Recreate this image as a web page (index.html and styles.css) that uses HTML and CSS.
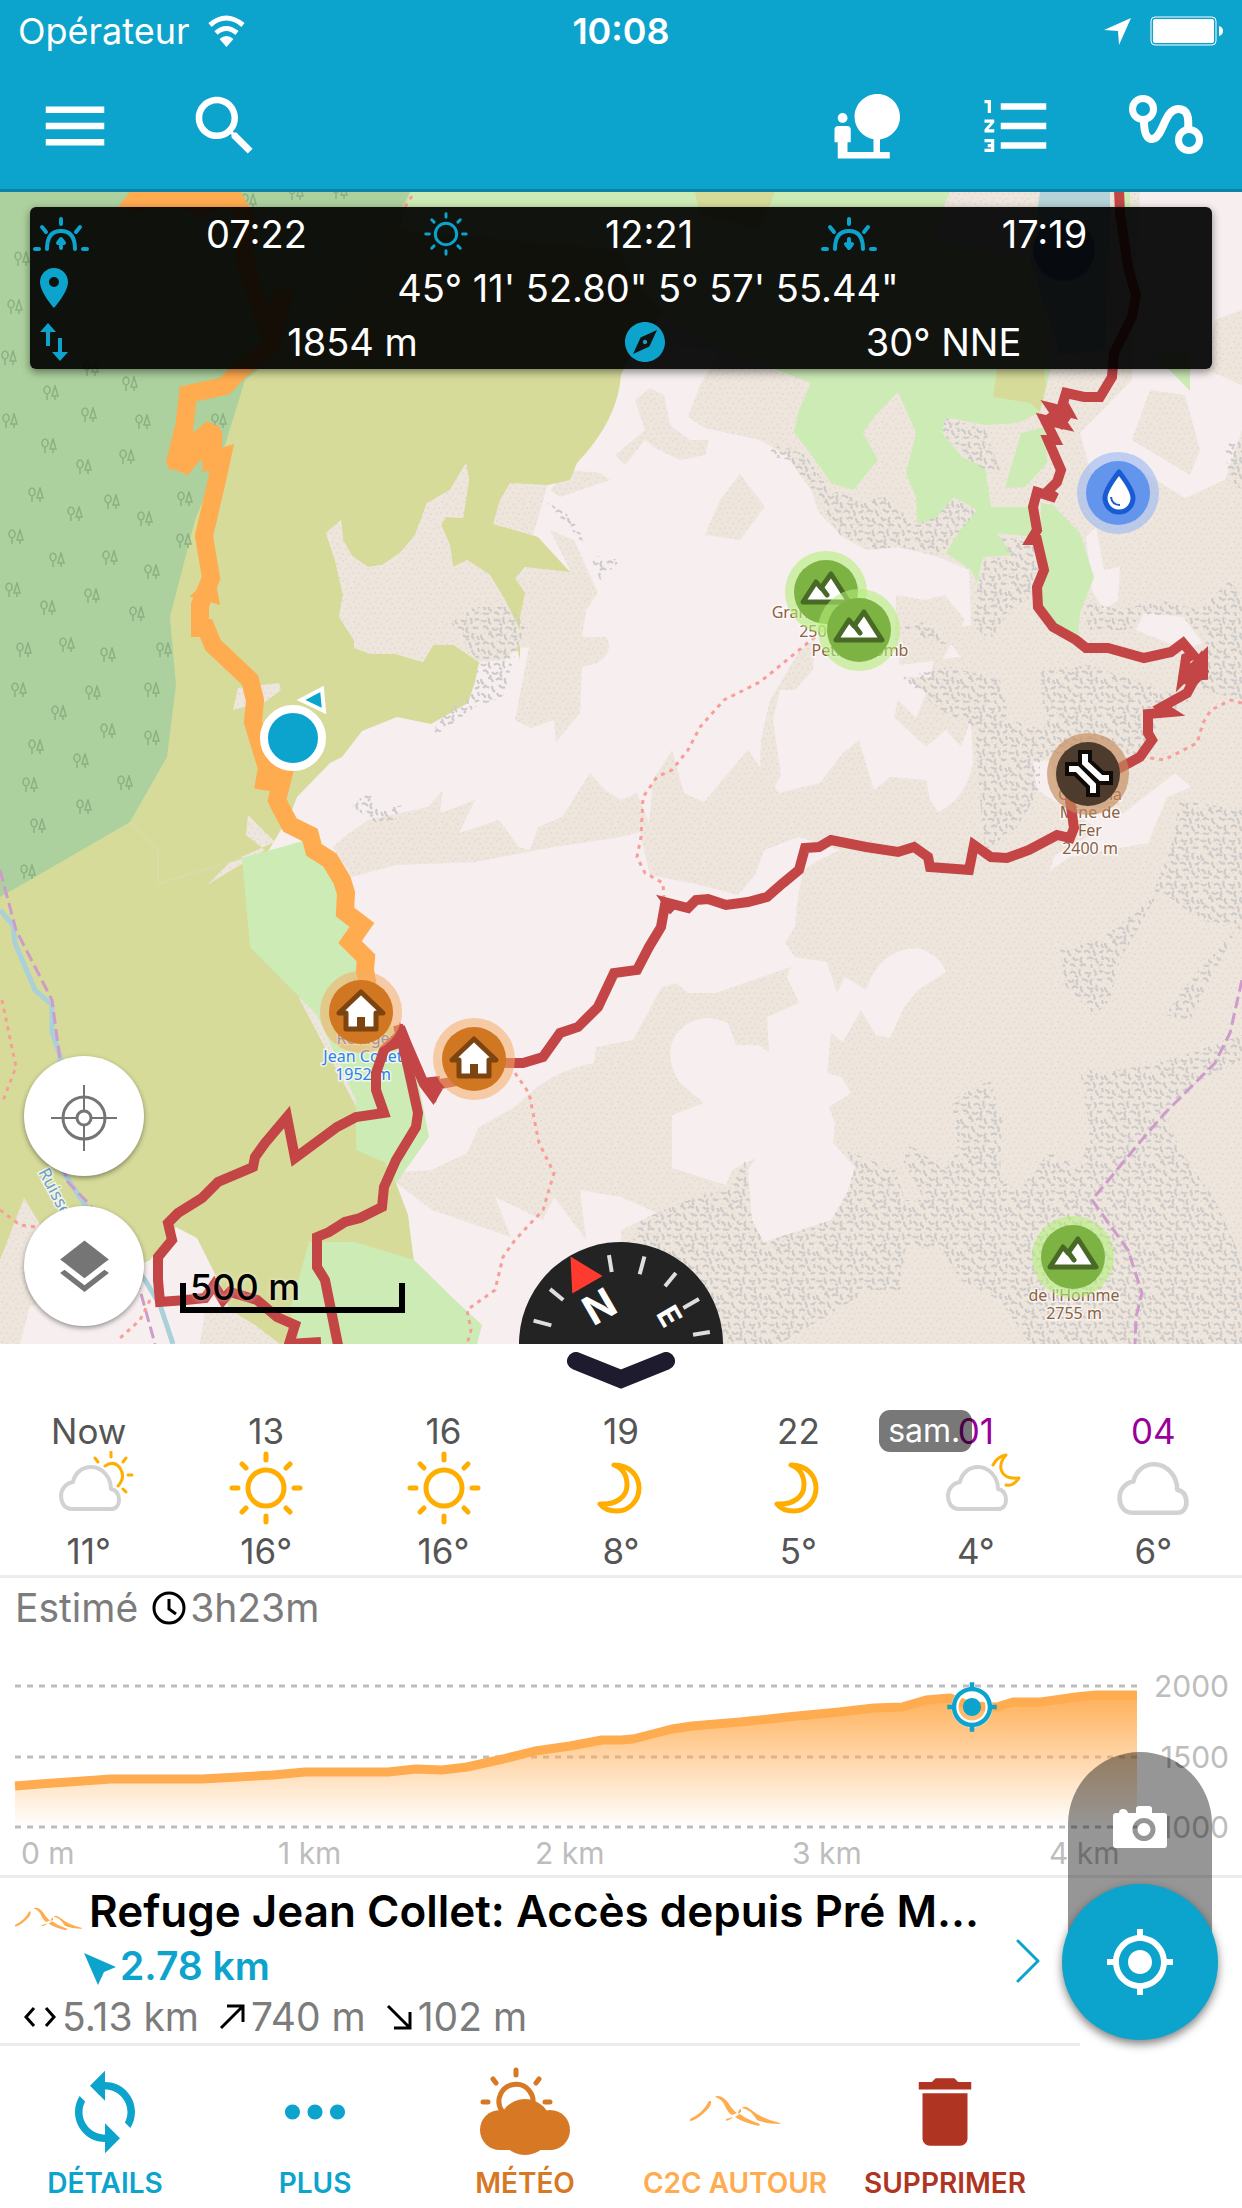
FILE: index.html
```html
<!DOCTYPE html>
<html lang="fr">
<head>
<meta charset="utf-8">
<meta name="viewport" content="width=device-width">
<title>Carte</title>
<link rel="stylesheet" href="styles.css">
</head>
<body>
<svg class="defs" aria-hidden="true">
  <defs>
    <symbol id="i-sun" viewBox="0 0 74 74"><g fill="none" stroke="currentColor" stroke-width="5" stroke-linecap="round"><circle cx="37" cy="37" r="18"/><path d="M37 3v6M37 65v6M3 37h6M65 37h6M13 13l4 4M57 57l4 4M61 13l-4 4M17 57l-4 4"/></g></symbol>
    <symbol id="i-moon" viewBox="0 0 90 74"><path fill="none" stroke="currentColor" stroke-width="5" stroke-linejoin="round" d="M38 14C54 14 63 25 63 37C63 50 53 60 41 60C33 60 27 57 24 53C40 54 51 46 51 34C51 24 46 17 38 14Z"/></symbol>
    <symbol id="i-cloud" viewBox="15 14 62 46"><path fill="none" stroke="#d2d2d2" stroke-width="4" stroke-linejoin="round" d="M28 58C20 58 17 51 17 45C17 38 22 32 29 31C31 22 38 16 47 16C58 16 67 26 67 38C72 39 75 43 75 49C75 54 72 58 67 58Z"/></symbol>
    <symbol id="i-gps" viewBox="0 0 24 24"><path fill="currentColor" d="M12 8c-2.21 0-4 1.79-4 4s1.79 4 4 4 4-1.79 4-4-1.79-4-4-4zm8.94 3c-.46-4.17-3.77-7.48-7.94-7.94V1h-2v2.06C6.83 3.52 3.52 6.83 3.06 11H1v2h2.06c.46 4.17 3.77 7.48 7.94 7.94V23h2v-2.06c4.17-.46 7.48-3.77 7.94-7.94H23v-2h-2.06zM12 19c-3.87 0-7-3.13-7-7s3.13-7 7-7 7 3.13 7 7-3.13 7-7 7z"/></symbol>
    <symbol id="i-c2c" viewBox="0 28 90 32"><path fill="currentColor" d="M0 52Q13 46 19 34L21 34Q22 38 16 44Q8 52 1 54Q-1 54 0 52ZM25 30Q27 28 32 30Q36 32 41 40Q44 44 47 46L42 48Q38 46 35 39Q32 32 25 30ZM48 45L50 42H51L51 45L48 47ZM36 52L43 50L41 52L36 54ZM45 50L50 47Q56 52 70 57L69 59Q54 56 45 50ZM52 41Q55 38 60 42Q72 52 90 56V57Q76 57 67 53Q60 42 52 41Z"/></symbol>
    <symbol id="m-peak" viewBox="-41 -41 82 82"><circle r="41" fill="#b4ee78" fill-opacity=".58"/><circle r="32" fill="#7db343"/><path d="M-23 10L-10 -10L-5 -4L5 -18L23 10Z" fill="#fff" stroke="#496a27" stroke-width="5" stroke-linejoin="round"/><path d="M-5 -5L1 3" stroke="#496a27" stroke-width="5" stroke-linecap="round"/></symbol>
    <symbol id="m-hut" viewBox="-41 -41 82 82"><circle r="41" fill="#f4ad66" fill-opacity=".55"/><circle r="32" fill="#d17722"/><path d="M0 -20L22 1H15V17H-15V1H-22Z" fill="#fff" stroke="#7c4411" stroke-width="5" stroke-linejoin="round"/><path d="M-4 17V5H4V17" fill="#7c4411"/></symbol>
    <symbol id="tree" viewBox="0 0 16 16"><path fill="none" stroke="#8bb082" stroke-width="1.5" d="M4 15V9M4 1a3 4 0 1 0 .1 0M12 15v-4M12 1l-3 10h6z"/></symbol>
    <pattern id="scree" width="22" height="20" patternUnits="userSpaceOnUse"><rect width="22" height="20" fill="#eee6dd"/><path stroke="#dcd3cd" stroke-width="1.6" stroke-linecap="round" d="M2 2h.1M7 4h.1M13 1h.1M18 4h.1M4 8h.1M10 8h.1M16 9h.1M21 8h.1M1 13h.1M7 13h.1M13 14h.1M19 14h.1M4 18h.1M10 18h.1M16 19h.1"/></pattern>
    <pattern id="rock" width="48" height="44" patternUnits="userSpaceOnUse"><path fill="none" stroke="#cdcbca" stroke-width="2.2" d="M1 4q3 3 5 0M9 2q-1 5 2 6M14 5q4-3 6 1M24 1q-2 4 1 7M29 4q4 3 6 0M38 2q3 3 1 6M43 4q2-2 4 0M3 11q4-2 5 3M12 12q3 4 6 0M22 11q-3 3 0 6M26 12q3-2 6 2M36 11q-3 3 0 6M41 11q3 2 5 0M1 19q0 4 3 5M8 18q4 0 5 4M16 20q3-3 6 0M25 18q-1 4 2 6M31 19q3 3 6 1M41 17q-2 4 1 6M45 20l2 4M3 28q3-3 6 0M12 26q0 4 3 6M19 25q3 4 6 2M28 28q3-3 6 1M37 26q3 4 1 6M43 28q3 1 4-2M1 34q4 0 4 4M9 34q-1 4 3 5M17 33q2 5 5 2M26 33q-3 3 0 6M31 35q3-3 6 0M40 34q0 4 3 5M3 41q4 2 6 0M14 41q3-2 5 2M24 42q3-3 6 0M35 40l1 4M43 42q2-2 4-1M19 8l3 1M32 9l2-2M6 25l-2 2M46 32l1 4M10 15l1 3M34 24l3-1"/></pattern>
  </defs>
</svg>

<header class="header">
  <div class="status">
    <span class="carrier">Opérateur
      <svg width="37" height="33" viewBox="0 0 37 33"><g fill="none" stroke="#fff" stroke-width="5"><path d="M2 10Q18 -4 35 10M8 18Q18 9 29 18"/></g><path fill="#fff" d="M11.500 24Q18.500 18 25.500 24L18.500 32Z"/></svg>
    </span>
    <span class="clock">10:08</span>
    <span class="power">
      <svg width="28" height="27" viewBox="0 0 28 27"><path fill="#fff" d="M27 0L15 27L14 13L0 12Z"/></svg>
      <svg width="74" height="30" viewBox="0 0 74 30"><rect x="1" y="1" width="65" height="28" rx="4" fill="none" stroke="#fff"/><rect x="3" y="3" width="61" height="24" rx="2" fill="#fff"/><path fill="#fff" d="M69 10q4 1 4 5t-4 5z"/></svg>
    </span>
  </div>
  <nav class="toolbar">
    <button aria-label="Menu"><svg viewBox="0 0 24 24"><path d="M3 18h18v-2H3v2zm0-5h18v-2H3v2zm0-7v2h18V6H3z"/></svg></button>
    <button aria-label="Rechercher"><svg viewBox="0 0 24 24"><path d="M15.500 14h-.79l-.28-.27C15.410 12.590 16 11.110 16 9.500 16 5.910 13.090 3 9.500 3S3 5.910 3 9.500 5.910 16 9.500 16c1.610 0 3.090-.59 4.230-1.570l.27.28v.79l5 4.990L20.490 19l-4.990-5zm-6 0C7.010 14 5 11.990 5 9.500S7.010 5 9.500 5 14 7.010 14 9.500 11.990 14 9.500 14z"/></svg></button>
    <button class="push" aria-label="Lieux"><svg viewBox="0 0 24 24"><path d="M22.170 9.170c0-3.870-3.130-7-7-7s-7 3.130-7 7c0 3.470 2.520 6.340 5.830 6.890V20H6v-3h1v-4c0-.55-.45-1-1-1H3c-.55 0-1 .45-1 1v4h1v5h16v-2h-3v-3.880c3.470-.41 6.170-3.360 6.170-6.950zM4.500 11c.83 0 1.500-.67 1.500-1.500S5.330 8 4.500 8 3 8.670 3 9.500 3.670 11 4.500 11z"/></svg></button>
    <button aria-label="Liste"><svg viewBox="0 0 24 24"><path d="M2 17h2v.5H3v1h1v.5H2v1h3v-4H2v1zm1-9h1V4H2v1h1v3zm-1 3h1.800L2 13.100v.9h3v-1H3.200L5 10.900V10H2v1zm5-6v2h14V5H7zm0 14h14v-2H7v2zm0-6h14v-2H7v2z"/></svg></button>
    <button aria-label="Itinéraires"><svg viewBox="0 0 78 78"><g class="line" stroke-width="7"><circle cx="15" cy="22" r="10.500"/><circle cx="61" cy="53" r="10.500"/><path stroke-width="8" d="M16 33C16 45 18 52 24 52C35 52 36 22 50 22C60 22 61 31 60 42"/></g></svg></button>
  </nav>
</header>

<main class="map">
  <svg class="map-canvas" viewBox="0 192 1242 1152" preserveAspectRatio="xMidYMid slice" role="img" aria-label="Carte topographique">
    <rect y="192" width="1242" height="1152" fill="url(#scree)"/>
    <!-- bare ground -->
    <g fill="#f6eeef">
      <path d="M590 340L720 350L700 385L688 417L705 428L760 440L786 455L811 490L819 513L843 537L866 550L898 547L938 557L969 570L971 625L940 630L950 643L961 657L934 660L930 677L906 677L926 693L916 718L898 700L894 717L926 747L946 730L961 747L971 720L973 763Q965 800 938 812L930 800L926 780L890 777L874 790L859 740L843 753L820 783L803 787L779 793L748 750L728 773L704 802L684 793L672 750L653 780L649 823L637 793L621 800L605 790L590 773L562 817L538 827L530 850L519 847L499 820L459 833L475 800L440 813L443 790L428 807L368 820L344 837L333 847L352 877L396 865L475 862L554 847L621 837L640 832L650 875L700 885L738 895L755 875L764 850L799 837L840 850L819 860L803 870L797 903L795 927L785 943L795 957L827 962L837 993L845 977L866 990Q880 948 918 948Q940 955 946 972L918 990L904 1007L890 1038L876 1035L861 1010L843 1042L831 1033L827 1073L841 1077L851 1093L829 1107L835 1123L833 1143L855 1167L847 1193L831 1220L764 1242L752 1220L748 1170L756 1158L732 1170L726 1185L672 1168V1115L704 1103L680 1083Q660 1050 680 1030Q700 1010 728 1023L736 1045H758L769 1052L767 1017L799 1003L787 977L791 967L716 993H688L676 983L661 988L633 1040L596 1047L594 1063Q550 1070 515 1107L479 1127L467 1153L432 1170L396 1172L240 860L290 700L520 580Z"/>
      <path d="M396 1183L432 1210L511 1237L495 1197L543 1220L554 1197L586 1240L580 1190L621 1197L657 1213L621 1230V1344H400Z"/>
      <path d="M15 1344L20 1310L80 1290L150 1260L176 1227L197 1238L218 1280L230 1300L200 1344ZM1140 192H1242V310L1215 320L1205 369L1242 385V430L1225 480L1185 498L1140 470L1096 490L1080 433L1132 380Z"/>
      <path d="M1086 537L1096 527L1104 570L1120 567L1118 600L1104 610L1092 590ZM1136 630L1144 613L1183 617L1203 643L1183 650L1168 643ZM1033 762L1050 760L1060 800L1124 813L1175 773L1191 787L1167 797L1148 843L1069 857L1049 872L1055 855L1100 830L1037 790Z"/>
    </g>
    <g fill="url(#scree)">
      <path d="M635 400L650 388L664 395L670 425L690 440L709 440L705 455L680 460L655 448L645 440L625 465L615 455L645 430ZM705 535L720 500L740 474L765 507L740 540ZM760 770L761 740L770 700L800 650L815 640L813 670L795 690L780 690L773 720L781 775L770 795ZM896 595L925 600L945 595L965 620L942 660L900 665L895 640ZM1150 390L1185 395L1200 450L1190 475L1132 440Z"/>
      <path d="M515 577L527 567L570 570L550 530L574 540L598 593L586 610L582 637L606 637Q615 650 598 663L582 667L580 713L556 742L554 720L531 728L515 720L529 647L505 650L500 580ZM550 490L570 470L600 473L610 480L560 497ZM490 540L515 542L538 545V566Z"/>
      <path d="M20 1200L30 1230L34 1290L20 1344H0V1290ZM205 1310L255 1300L290 1344H200Z"/>
    </g>
    <!-- heath and meadow -->
    <path fill="#d6db9a" d="M0 192H740L690 290Q640 330 621 375Q618 420 577 463L570 480L548 485L510 483L500 500L493 524L538 537L570 572L525 567L515 578L525 593L520 617V660L505 600L490 575L467 560L453 567L450 545L441 525L446 517L463 518L469 480L466 463L450 490L427 503L415 535L400 553L382 565L368 567L352 556L343 540L341 520L326 533L335 560L343 595L339 617L354 640V648L371 654H396L423 662L433 645H454L479 662L475 682L468 703L431 724L397 717L362 731L342 757L330 763L297 797L290 815L267 853L300 1000L396 1183L408 1215L414 1262L380 1310L280 1344L255 1325L230 1310L218 1280L197 1238L176 1227L150 1260L80 1290L24 1198L0 1340Z"/>
    <path fill="url(#scree)" d="M341 520L326 533L335 560L343 595L339 617L354 640V648L371 654H396L423 662L433 645H454L479 662L505 660L520 645V630L505 600L490 575L467 560L453 567L450 545L441 525L446 517L463 518L469 480L466 463L450 490L427 503L415 535L400 553L382 565L368 567L352 556L343 540ZM233 710L238 688L279 683L281 690L265 702ZM248 815L246 835L265 850L207 885L230 862L275 842ZM24 1198L38 1240L36 1290L0 1344V1260Z"/>
    <g fill="#cdebb5">
      <path d="M410 192H695L775 192H950L930 240L1040 260L1050 369L1046 390L1039 413L1017 423L985 425L946 417L942 433L962 457L985 467L991 507H1033V537L997 533L1013 555L983 557L977 583L971 570L946 553L960 530L977 510L954 497L934 520L917 523L916 497L906 473L916 433L906 410L898 392L874 417L863 433L878 460L853 490L831 483L815 460L794 432L799 410L811 383L775 369L700 340Q640 300 620 250L400 230ZM1021 433L1045 427L1047 463L1025 487L1005 488ZM1041 503L1053 505L1080 533L1094 577L1080 613L1078 638L1053 630L1040 600ZM1150 350H1190V391ZM1130 192H1115V240H1130Z"/>
      <path d="M242 858L303 841L335 870L370 965L390 1025L412 1050L429 1137L396 1183L386 1163L356 1150V1100L317 1015L250 947ZM309 1242H355L414 1260L455 1300L482 1325L477 1344H300L290 1310Z"/>
    </g>
    <path fill="#d6db9a" d="M695 192H775L760 230L700 215ZM997 369L993 397L1030 403L1040 412L1046 385L1044 369Z"/>
    <path fill="#add19e" d="M0 192H410L360 290L245 380L222 455L195 520L170 617L176 685L167 757L130 822L30 880L0 897Z"/>
    <path fill="#b5d3d8" d="M1040 192H1110V215L1105 350L1060 355L1030 260Z"/>
    <path fill="none" stroke="#d9dca6" stroke-width="2" d="M130 822L158 850V884L242 858"/>
    <!-- cliffs -->
    <g fill="url(#rock)">
      <path d="M762 455L780 445L805 455L830 490L860 500L885 497L915 525L935 517L955 497L977 510L958 535L940 555L898 547L870 550L840 535L811 490L790 460ZM945 417L985 430L1000 470L985 470L965 457L942 433ZM978 583L985 557L1010 558L1000 535L1035 545L1040 590L1010 610L990 640L972 625ZM1225 440H1242V490L1228 480Z"/>
      <path d="M902 677L950 667L1000 680L1010 720L1045 730L1040 670L1090 665L1190 700L1160 720L1140 760L1100 740L1040 760V790L1015 830L985 850L980 800L975 730L940 710ZM1080 600L1120 610L1160 600L1200 610L1230 580L1242 600V700L1200 690L1206 640L1180 615L1140 615L1130 630L1090 630ZM900 625L925 622L950 645L925 640Z"/>
      <path d="M1242 810L1180 800L1170 850L1150 900L1100 940L1060 950L1065 985L1095 1015L1110 1000L1120 960L1160 890L1200 920L1242 930ZM1240 925L1190 980L1165 1015L1190 1020L1210 980ZM1242 1035L1170 1060L1120 1070L1080 1070L1090 1130L1080 1170L1050 1150L1020 1190L1000 1180L1002 1120L990 1080L952 1100L958 1150L945 1170L910 1145L903 1160L925 1200L905 1200L895 1170L845 1150L855 1167L847 1193L831 1220L764 1242L752 1220L745 1160L728 1190L700 1195L640 1220L630 1250L720 1344H780L820 1320L870 1290L900 1290L905 1250L940 1245L960 1280L1000 1300L1030 1344H1242V1260L1215 1200L1180 1150L1165 1110L1200 1080L1242 1060Z"/>
      <path d="M451 623L475 607L511 607L525 627L511 667L503 697L475 707L434 737L436 720L471 693L479 663ZM547 503Q580 515 584 547L572 530ZM590 555L621 560L600 580ZM352 807L368 790L380 810L403 805L395 820L375 822Z"/>
    </g>
    <!-- woodland symbols -->
    <g>
      <use href="#tree" x="43" y="385" width="16" height="16"/><use href="#tree" x="81" y="407" width="16" height="16"/><use href="#tree" x="135" y="414" width="16" height="16"/><use href="#tree" x="2" y="413" width="16" height="16"/><use href="#tree" x="41" y="438" width="16" height="16"/><use href="#tree" x="119" y="449" width="16" height="16"/><use href="#tree" x="76" y="459" width="16" height="16"/><use href="#tree" x="28" y="487" width="16" height="16"/><use href="#tree" x="104" y="494" width="16" height="16"/><use href="#tree" x="67" y="506" width="16" height="16"/><use href="#tree" x="137" y="511" width="16" height="16"/><use href="#tree" x="177" y="491" width="16" height="16"/><use href="#tree" x="211" y="413" width="16" height="16"/><use href="#tree" x="8" y="529" width="16" height="16"/><use href="#tree" x="49" y="552" width="16" height="16"/><use href="#tree" x="102" y="550" width="16" height="16"/><use href="#tree" x="144" y="564" width="16" height="16"/><use href="#tree" x="176" y="533" width="16" height="16"/><use href="#tree" x="5" y="582" width="16" height="16"/><use href="#tree" x="84" y="588" width="16" height="16"/><use href="#tree" x="40" y="600" width="16" height="16"/><use href="#tree" x="129" y="606" width="16" height="16"/><use href="#tree" x="16" y="642" width="16" height="16"/><use href="#tree" x="59" y="637" width="16" height="16"/><use href="#tree" x="100" y="647" width="16" height="16"/><use href="#tree" x="156" y="642" width="16" height="16"/><use href="#tree" x="11" y="682" width="16" height="16"/><use href="#tree" x="85" y="685" width="16" height="16"/><use href="#tree" x="144" y="682" width="16" height="16"/><use href="#tree" x="51" y="705" width="16" height="16"/><use href="#tree" x="100" y="723" width="16" height="16"/><use href="#tree" x="144" y="730" width="16" height="16"/><use href="#tree" x="28" y="739" width="16" height="16"/><use href="#tree" x="73" y="753" width="16" height="16"/><use href="#tree" x="117" y="775" width="16" height="16"/><use href="#tree" x="22" y="777" width="16" height="16"/><use href="#tree" x="76" y="799" width="16" height="16"/><use href="#tree" x="30" y="818" width="16" height="16"/><use href="#tree" x="20" y="864" width="16" height="16"/><use href="#tree" x="241" y="193" width="16" height="16"/><use href="#tree" x="288" y="185" width="16" height="16"/><use href="#tree" x="332" y="184" width="16" height="16"/><use href="#tree" x="14" y="251" width="16" height="16"/><use href="#tree" x="7" y="299" width="16" height="16"/><use href="#tree" x="1" y="350" width="16" height="16"/><use href="#tree" x="83" y="361" width="16" height="16"/><use href="#tree" x="122" y="376" width="16" height="16"/>
    </g>
    <!-- streams, boundaries, footpaths -->
    <g fill="none">
      <path stroke="#aad0d8" stroke-width="5" d="M0 910L13 925L15 943L35 990L52 1005V1032L60 1055L62 1170L85 1205L145 1280L160 1305L173 1344"/>
      <g stroke="#cf9bcb" stroke-width="3" stroke-dasharray="12 5"><path d="M0 870L16 930L52 1000L60 1060L62 1150L66 1180L90 1205L140 1290L155 1344"/><path d="M1242 980L1230 1033L1215 1063L1165 1113L1140 1142L1092 1200L1128 1250L1142 1293L1136 1317L1135 1344"/></g>
      <g stroke="#f79e98" stroke-width="3" stroke-dasharray="4 5"><path d="M815 637L787 660L760 682L724 700L700 727L688 750L672 770L657 777L643 797L641 837L637 857L645 873L663 883L664 900"/><path d="M515 1073L529 1093L539 1143L554 1173L543 1210L515 1240L503 1257L495 1290L467 1310L471 1330L467 1344"/><path d="M1242 703L1231 700L1211 710L1203 723L1197 743L1164 760L1144 757"/><path d="M2 1000L16 1067L2 1103M0 1210L20 1225L38 1227M150 1300L140 1320L118 1340M412 196L402 212"/></g>
    </g>
    <!-- map labels -->
    <g class="place" text-anchor="middle">
      <text x="795" y="618">Grand</text><text x="827" y="637">2500 m</text><text x="860" y="656">Petit Colomb</text>
      <text x="1090" y="800">Col de la</text><text x="1090" y="818">Mine de</text><text x="1090" y="836">Fer</text><text x="1090" y="854">2400 m</text>
      <text x="1074" y="1301">de l'Homme</text><text x="1074" y="1319">2755 m</text>
    </g>
    <g class="place hut" text-anchor="middle"><text x="363" y="1044">Refuge</text><text x="363" y="1062">Jean Collet</text><text x="363" y="1080">1952 m</text></g>
    <text class="place river" transform="translate(38 1172) rotate(62)">Ruisseau</text>
    <!-- other routes -->
    <g fill="none" stroke="#c44546" stroke-width="10">
      <path d="M1119 190L1120 213L1128 267L1136 295L1132 317L1114 353L1112 377L1100 397L1084 397L1066 393L1063 403L1068 412L1052 408L1063 424L1045 420L1055 440L1048 440L1061 470L1057 482L1047 492L1056 498L1037 492L1033 507L1037 530L1031 540L1037 540L1044 570L1037 587L1038 607L1053 627L1076 640L1086 648L1108 648L1144 658L1171 652L1183 643L1193 655L1186 658L1183 678L1203 658L1203 675L1185 676L1195 678L1187 693L1162 707L1170 712L1148 714L1148 733L1152 740L1140 757L1120 768L1088 773L1070 800L1074 828L1070 838L1057 835L1029 850L1007 858L991 857L974 845L969 870L930 867L928 857L914 847L898 852L866 847L831 840L819 847L805 848L799 870L783 883L767 897L748 902L726 905L708 899L696 900L688 908L668 903L673 910L665 905L661 927L649 947L637 970L614 973L598 1007L578 1027L560 1033L543 1057L523 1063L507 1063L474 1060L460 1055L463 1080L440 1084L433 1096L424 1084L408 1047L400 1027"/>
      <path d="M398 1025L408 1067L418 1113L416 1127L396 1160L384 1187L382 1207L360 1218L345 1222L329 1232L317 1237L317 1267L325 1280L334 1325L339 1350"/>
      <path d="M400 1035L384 1050L376 1073V1090L384 1113L356 1117L337 1127L295 1158L287 1117L265 1143L255 1157L253 1167L218 1182L202 1198L178 1213L168 1223L172 1240L158 1257V1280L160 1302L186 1300L205 1298L214 1285L223 1300L230 1292L257 1300L277 1317L295 1325L289 1344L321 1342"/>
      <path fill="#c44546" stroke="none" d="M1180 680L1202 650L1209 672L1192 690ZM388 1052L400 1022L408 1045ZM422 1078L440 1076L436 1103ZM1060 404L1045 416L1062 430L1071 418Z"/>
    </g>
    <path fill="none" stroke="#ffab4f" stroke-width="18" d="M128 207L145 199L186 199L200 208L232 195L246 218L244 260L268 330L285 290L272 345L240 370L225 386L188 394L184 430L176 470M180 470L206 440L213 440L212 460L222 457L217 480L204 536L211 578L200 605V628L206 628L213 645L250 680L255 700L253 722L262 752L267 768L263 790"/>
    <path fill="#ffab4f" d="M118 207L130 192H235L246 207ZM166 463L175 425L194 432L207 421L220 427V452L230 456L217 485L197 453L181 473ZM190 596L208 580L216 583L220 605L210 602L191 597Z"/>
    <path fill="none" stroke="#ffab4f" stroke-width="18" d="M286 765L277 800L282 810L290 825L310 835L314 850L330 860L342 880L346 893L345 912L362 925L350 942L366 958L365 970L372 1010"/>
    <!-- points of interest -->
    <circle cx="1064" cy="250" r="31" fill="#3c67c9" opacity=".7"/>
    <use href="#m-peak" x="785" y="551" width="82" height="82"/>
    <use href="#m-peak" x="818" y="589" width="82" height="82"/>
    <use href="#m-peak" x="1032" y="1216" width="82" height="82"/>
    <use href="#m-hut" x="320" y="971" width="82" height="82"/>
    <use href="#m-hut" x="433" y="1018" width="82" height="82"/>
    <g transform="translate(1118 493)"><circle r="41" fill="#94b3f4" fill-opacity=".55"/><circle r="32" fill="#6395ec"/><path d="M1 -21Q15 -3 15 5A14 14 0 0 1 -13 5Q-13 -3 1 -21Z" fill="#fff" stroke="#195bd3" stroke-width="5" stroke-linejoin="round"/><path d="M-7 4Q-6 12 2 12" fill="none" stroke="#195bd3" stroke-width="2"/></g>
    <g transform="translate(1088 774)"><circle r="41" fill="#c48a5b" fill-opacity=".65"/><circle r="32" fill="#4d3b2e"/><g fill="none" stroke-linecap="square"><path stroke="#0d0a07" stroke-width="14" stroke-linejoin="round" d="M-3 -17V-11L13 4H18M-16 -5H-11L5 11V16"/><path stroke="#fff" stroke-width="6" d="M-3 -17V-11L13 4H18M-16 -5H-11L5 11V16"/></g></g>
    <!-- user position -->
    <circle cx="293" cy="738" r="29" fill="#0ca3cc" stroke="#fff" stroke-width="8"/>
    <path d="M301 700L322 689L324 711Z" fill="#0ca3cc" stroke="#fff" stroke-width="4"/>
    <!-- compass -->
    <g transform="translate(621 1344) rotate(-30)">
      <circle r="102" fill="#232323"/>
      <path fill="#ff3b30" d="M0 -101L18 -68H-17Z"/>
      <path stroke="#dedede" stroke-width="4" d="M34 -83L28 -67M64 -64L51 -51M83 -34L67 -28M90 0H72M83 34L67 28M-34 -83L-28 -67M-64 -64L-51 -51"/>
      <text class="north" y="-29" text-anchor="middle">N</text>
      <text class="east" transform="rotate(90)" y="-45" text-anchor="middle">E</text>
    </g>
  </svg>

  <section class="gauges" aria-label="Position">
    <div class="gauge-row thirds">
      <div><svg class="g-wide" viewBox="0 0 56 34"><g class="line" stroke-width="4"><path d="M14 32Q14 14 28 14T42 32M2 32H6M50 32H54M28 2V7M9 10L13 15M47 10L43 15"/><path d="M28 23V31M25 26L28 22L31 26"/></g></svg><span>07:22</span></div>
      <div><svg class="g-sun" viewBox="0 0 74 74"><use href="#i-sun"/></svg><span>12:21</span></div>
      <div><svg class="g-wide" viewBox="0 0 56 34"><g class="line" stroke-width="4"><path d="M14 32Q14 14 28 14T42 32M2 32H6M50 32H54M28 2V7M9 10L13 15M47 10L43 15"/><path d="M28 22V30M25 27L28 31L31 27"/></g></svg><span>17:19</span></div>
    </div>
    <div class="gauge-row">
      <div><svg class="g-icon" viewBox="0 0 24 24"><path d="M12 2C8.130 2 5 5.130 5 9c0 5.250 7 13 7 13s7-7.750 7-13c0-3.870-3.130-7-7-7zm0 9.500a2.500 2.500 0 0 1 0-5 2.500 2.500 0 0 1 0 5z"/></svg><span>45° 11' 52.80" 5° 57' 55.44"</span></div>
    </div>
    <div class="gauge-row halves">
      <div><svg class="g-icon" viewBox="0 0 48 48"><path d="M18 5L26 14H20V28H16V14H10ZM30 43L22 34H28V20H32V34H38Z"/></svg><span>1854 m</span></div>
      <div><svg class="g-icon" viewBox="0 0 24 24"><path d="M12 10.900c-.61 0-1.100.49-1.100 1.100s.49 1.100 1.100 1.100c.61 0 1.100-.49 1.100-1.100s-.49-1.100-1.100-1.100zM12 2C6.480 2 2 6.480 2 12s4.480 10 10 10 10-4.480 10-10S17.520 2 12 2zm2.190 12.190L6 18l3.810-8.190L18 6l-3.810 8.190z"/></svg><span>30° NNE</span></div>
    </div>
  </section>

  <div class="map-buttons">
    <button aria-label="Centrer"><svg width="66" height="66" viewBox="-33 -33 66 66"><g fill="none" stroke="#757575" stroke-width="3"><circle r="21"/><circle r="7"/><path stroke-width="2" d="M-33 0H-8M8 0H33M0 -33V-8M0 8V33"/></g></svg></button>
    <button aria-label="Couches"><svg width="65" height="65" viewBox="0 0 24 24"><path fill="#757575" d="M11.990 18.540l-7.370-5.730L3 14.070l9 7 9-7-1.630-1.270-7.380 5.740zM12 16l7.360-5.730L21 9l-9-7-9 7 1.630 1.270L12 16z"/></svg></button>
  </div>
  <div class="scale">500 m</div>
</main>

<section class="sheet">
  <button class="handle" aria-label="Réduire"><svg width="108" height="38" viewBox="0 0 108 38"><path fill="none" stroke="#1e1b2f" stroke-width="18" stroke-linecap="round" d="M9 9L54 27L99 9"/></svg></button>

  <div class="weather">
    <div class="hour"><b>Now</b><svg class="gold" width="90" height="74" viewBox="0 0 90 74"><use href="#i-cloud" x="15" y="14" width="62" height="46"/><path class="line" stroke-width="3" d="M61 15Q70 9 76 17Q82 26 74 35M67 1V6M51 7L54 11M82 7L79 11M84 24H88M79 38L82 41"/></svg><span>11°</span></div>
    <div class="hour"><b>13</b><svg class="gold" width="74" height="74"><use href="#i-sun"/></svg><span>16°</span></div>
    <div class="hour"><b>16</b><svg class="gold" width="74" height="74"><use href="#i-sun"/></svg><span>16°</span></div>
    <div class="hour"><b>19</b><svg class="gold" width="90" height="74"><use href="#i-moon"/></svg><span>8°</span></div>
    <div class="hour"><b>22</b><svg class="gold" width="90" height="74"><use href="#i-moon"/></svg><span>5°</span></div>
    <div class="hour next"><b>01</b><i class="day">sam.</i><svg class="gold" width="90" height="74" viewBox="0 0 90 74"><use href="#i-cloud" x="15" y="14" width="62" height="46"/><path class="line" stroke-width="3" d="M62 14C65 8 69 5 75 4C66 14 68 29 88 27C84 33 80 35 75 34"/></svg><span>4°</span></div>
    <div class="hour next"><b>04</b><svg width="72" height="74"><use href="#i-cloud" y="11" width="72" height="53"/></svg><span>6°</span></div>
  </div>

  <div class="profile">
    <p class="estimate">Estimé <svg width="34" height="34" viewBox="0 0 34 34"><g fill="none" stroke="#000" stroke-width="3"><circle cx="17" cy="17" r="15"/><path d="M17 8V18L24 23"/></g></svg>3h23m</p>
    <svg class="chart" viewBox="0 0 1242 239" role="img" aria-label="Profil altimétrique">
      <defs><linearGradient id="fade" x1="0" y1="58" x2="0" y2="191" gradientUnits="userSpaceOnUse"><stop offset="0" stop-color="#ffab4f" stop-opacity=".95"/><stop offset="1" stop-color="#ffab4f" stop-opacity="0"/></linearGradient></defs>
      <path fill="none" stroke="#bdbdbd" stroke-width="3" stroke-dasharray="6 6" d="M15 50H1138M15 121H1138M15 191H1138"/>
      <path fill="url(#fade)" d="M15 150L40 148L111 143H202L273 139L305 136H388L416 133L442 134L467 131L503 123L535 115L570 110L602 104H621L633 103L672 93L692 90L740 86L787 81L839 76L874 72L902 71L926 64L950 62L970 70L997 71L1013 66H1041L1076 61L1096 59H1137V191H15Z"/>
      <path fill="none" stroke="#ffab4f" stroke-width="9" stroke-linejoin="round" d="M15 150L40 148L111 143H202L273 139L305 136H388L416 133L442 134L467 131L503 123L535 115L570 110L602 104H621L633 103L672 93L692 90L740 86L787 81L839 76L874 72L902 71L926 64L950 62L970 70L997 71L1013 66H1041L1076 61L1096 59H1137"/>
      <circle cx="972" cy="71" r="17" fill="none" stroke="#fff" stroke-width="7"/>
      <use href="#i-gps" x="945" y="44" width="54" height="54" color="#0ca3cc"/>
      <g class="axis"><text x="21" y="228">0 m</text><text x="278" y="228">1 km</text><text x="535" y="228">2 km</text><text x="792" y="228">3 km</text><text x="1049" y="228">4 km</text></g>
      <g class="axis" text-anchor="end"><text x="1229" y="61">2000</text><text x="1229" y="132">1500</text><text x="1229" y="202">1000</text></g>
    </svg>
  </div>

  <div class="route">
    <div class="route-text">
      <h1><svg class="c2c" width="67" height="24"><use href="#i-c2c"/></svg>Refuge Jean Collet: Accès depuis Pré M...</h1>
      <p class="distance"><svg width="32" height="32" viewBox="0 0 32 32"><path fill="currentColor" d="M0 0L32 14L20 19L14 32Z"/></svg>2.78 km</p>
      <p class="stats">
        <span><svg width="32" height="24" viewBox="0 0 32 24"><path d="M10 3L2 12L10 21M22 3L30 12L22 21"/></svg>5.13 km</span>
        <span><svg width="26" height="26" viewBox="0 0 26 26"><path d="M2 24L23 3M8 2H24V18"/></svg>740 m</span>
        <span><svg width="26" height="26" viewBox="0 0 26 26"><path d="M2 2L23 23M8 24H24V8"/></svg>102 m</span>
      </p>
    </div>
    <svg width="24" height="44" viewBox="0 0 24 44"><path fill="none" stroke="#0ca3cc" stroke-width="3" stroke-linecap="round" stroke-linejoin="round" d="M2 2L22 22L2 42"/></svg>
  </div>

  <nav class="actions">
    <button class="blue"><svg viewBox="0 0 24 24"><path d="M12 4V1L8 5l4 4V6c3.310 0 6 2.690 6 6 0 1.010-.25 1.970-.7 2.800l1.460 1.460C19.540 15.030 20 13.570 20 12c0-4.420-3.580-8-8-8zm0 14c-3.310 0-6-2.690-6-6 0-1.010.25-1.970.7-2.800L5.240 7.740C4.460 8.970 4 10.430 4 12c0 4.420 3.580 8 8 8v3l4-4-4-4v3z"/></svg>DÉTAILS</button>
    <button class="blue"><svg viewBox="0 0 24 24"><path d="M6 10c-1.100 0-2 .9-2 2s.9 2 2 2 2-.9 2-2-.9-2-2-2zm12 0c-1.100 0-2 .9-2 2s.9 2 2 2 2-.9 2-2-.9-2-2-2zm-6 0c-1.100 0-2 .9-2 2s.9 2 2 2 2-.9 2-2-.9-2-2-2z"/></svg>PLUS</button>
    <button class="amber"><svg viewBox="0 0 90 90"><path class="line" stroke-width="5" d="M22 44A17 17 0 1 1 52 40M36 3V8M13 12L16 16M59 12L56 16M3 35H8M65 35H70"/><circle cx="20" cy="63" r="20"/><circle cx="70" cy="63" r="20"/><circle cx="45" cy="58" r="26"/><circle cx="45" cy="62" r="26"/><path d="M20 60H70V83H20Z"/></svg>MÉTÉO</button>
    <button class="orange"><svg viewBox="0 0 90 90"><use href="#i-c2c" y="28" width="90" height="32"/></svg>C2C AUTOUR</button>
    <button class="red"><svg viewBox="0 0 24 24"><path d="M6 19c0 1.100.9 2 2 2h8c1.100 0 2-.9 2-2V7H6v12zM19 4h-3.500l-1-1h-5l-1 1H5v2h14V4z"/></svg>SUPPRIMER</button>
  </nav>

  <div class="fab">
    <button class="camera" aria-label="Photo"><svg width="54" height="42" viewBox="0 0 54 42"><path fill="#fff" fill-rule="evenodd" d="M3 7H6Q6 3 10 3T15 7H23V3Q23 0 26 0H36Q39 0 39 3V7H51Q54 7 54 10V39Q54 42 51 42H3Q0 42 0 39V10Q0 7 3 7ZM31 12A11 11 0 1 0 31 35A11 11 0 1 0 31 12ZM31 17A6 6 0 1 1 31 30A6 6 0 1 1 31 17Z"/></svg></button>
    <button class="locate" aria-label="Ma position"><svg width="72" height="72"><use href="#i-gps"/></svg></button>
  </div>
</section>
</body>
</html>
```
FILE: styles.css
```css
* { box-sizing: border-box; }

body {
  margin: 0;
  min-height: 100vh;
  display: flex;
  flex-direction: column;
  background: #fff;
  font-family: Inter, "Liberation Sans", sans-serif;
}

button {
  margin: 0;
  padding: 0;
  border: 0;
  background: none;
  font: inherit;
  color: inherit;
}

svg { display: block; flex: none; }
p, h1 { margin: 0; }

.defs { position: absolute; width: 0; height: 0; }

.line {
  fill: none;
  stroke: currentColor;
  stroke-linecap: round;
  stroke-linejoin: round;
}

/* header */
.header {
  background: #0ca3cc;
  border-bottom: 3px solid #0b83a4;
  color: #fff;
}

.status {
  display: grid;
  grid-template-columns: 1fr auto 1fr;
  align-items: center;
  height: 60px;
  padding: 2px 18px 0;
  font-size: 36px;
}

.carrier, .power { display: flex; align-items: center; gap: 18px; }
.power { justify-content: flex-end; }
.clock { font-weight: 600; }

.toolbar { display: flex; height: 129px; padding-top: 2px; }

.toolbar button {
  width: 150px;
  display: grid;
  place-items: center;
}

.toolbar svg { width: 78px; height: 78px; fill: currentColor; }
.toolbar .push { margin-left: auto; }
.toolbar button:last-child svg { fill: none; }

/* map */
.map {
  position: relative;
  flex: 1;
  min-height: 600px;
  overflow: hidden;
}

.map-canvas {
  position: absolute;
  inset: 0;
  width: 100%;
  height: 100%;
}

.place {
  font-family: "Noto Sans", sans-serif;
  font-size: 16px;
  fill: #8b6242;
  stroke: #ffffffb0;
  stroke-width: 3px;
  paint-order: stroke;
}

.hut { fill: #2f7ff0; }
.river { fill: #6a9fd0; font-size: 17px; }
.north { fill: #fff; font-size: 40px; font-weight: 700; }
.east { fill: #fff; font-size: 30px; font-weight: 700; }

.gauges {
  position: absolute;
  top: 15px;
  left: 30px;
  right: 30px;
  border-radius: 6px;
  background: rgba(0, 0, 0, .92);
  box-shadow: 0 3px 9px rgba(0, 0, 0, .45);
  color: #fff;
  font-size: 38px;
}

.gauge-row { display: grid; height: 54px; }
.thirds { grid-template-columns: 1fr 1fr 1fr; }
.halves { grid-template-columns: 1fr 1fr; }
.gauge-row div { display: flex; align-items: center; }
.gauge-row span { flex: 1; text-align: center; }
.gauge-row svg { color: #0ca3cc; fill: #0ca3cc; }
.g-wide { width: 56px; height: 34px; margin-left: 3px; }
.g-sun { width: 44px; height: 44px; margin: 0 12px 0 0; }
.g-icon { width: 48px; height: 48px; margin: 0 6px 0 0; }

.map-buttons {
  position: absolute;
  left: 24px;
  bottom: 18px;
  display: grid;
  gap: 30px;
}

.map-buttons button {
  width: 120px;
  height: 120px;
  padding-top: 3px;
  display: grid;
  place-items: center;
  border-radius: 50%;
  background: #fff;
  box-shadow: 0 2px 5px rgba(0, 0, 0, .4);
}

.scale {
  position: absolute;
  left: 180px;
  bottom: 31px;
  width: 225px;
  height: 30px;
  padding-left: 4px;
  border: 6px solid #000;
  border-top: 0;
  font-size: 36px;
  font-weight: 500;
  line-height: 8px;
  text-shadow: 0 0 4px #fff8;
}

/* bottom sheet */
.sheet { position: relative; }

.handle {
  display: grid;
  justify-items: center;
  width: 100%;
  height: 56px;
  padding-top: 8px;
}

.weather {
  display: grid;
  grid-template-columns: repeat(7, 1fr);
  padding: 11px 0 4px;
  border-bottom: 3px solid #ececec;
}

.hour {
  position: relative;
  display: flex;
  flex-direction: column;
  align-items: center;
  color: #555;
  font-size: 35px;
  line-height: 40px;
}

.hour b { font-weight: 400; }
.hour svg { margin-bottom: 6px; }
.next b { color: #990099; }
.gold { color: #ffae00; }

.day {
  position: absolute;
  top: -1px;
  left: -8px;
  width: 93px;
  padding-left: 9px;
  border-radius: 11px;
  background: rgba(0, 0, 0, .53);
  color: #fff;
  font-size: 32px;
  font-style: normal;
  line-height: 42px;
}

.profile { border-bottom: 3px solid #ececec; }

.estimate {
  display: flex;
  align-items: center;
  height: 58px;
  padding-left: 15px;
  color: #7c7c7c;
  font-size: 39px;
}

.estimate svg { margin: 2px 4px 0 14px; }

.chart { width: 100%; height: auto; }
.axis { fill: #bdbdbd; font-size: 30px; }

.route {
  display: flex;
  align-items: center;
  height: 165px;
  padding: 0 202px 0 15px;
}

.route-text { flex: 1; min-width: 0; align-self: start; }

h1 {
  display: flex;
  align-items: center;
  height: 66px;
  font-size: 44px;
  font-weight: 600;
  white-space: nowrap;
}

.c2c { margin: 16px 7px 0 0; color: #ffab4f; }

.distance {
  display: flex;
  align-items: center;
  gap: 4px;
  height: 42px;
  padding-left: 69px;
  color: #0ca3cc;
  font-size: 39px;
  font-weight: 600;
}

.distance svg { margin-top: 8px; }

.stats {
  display: flex;
  gap: 20px;
  padding: 8px 0 0 9px;
  color: #7c7c7c;
  font-size: 39px;
  line-height: 46px;
}

.stats span { display: flex; align-items: center; gap: 6px; }
.stats path { fill: none; stroke: #000; stroke-width: 3px; }

.actions {
  display: grid;
  grid-template-columns: repeat(5, 1fr);
  height: 165px;
  margin-right: 162px;
  padding: 21px 30px 0 0;
  border-top: 3px solid #ececec;
}

.actions button {
  display: flex;
  flex-direction: column;
  align-items: center;
  font-size: 28px;
  font-weight: 600;
  line-height: 52px;
  white-space: nowrap;
}

.actions svg { width: 90px; height: 90px; fill: currentColor; }
.actions .line { fill: none; }
.blue { color: #0ca3cc; }
.amber { color: #d67824; }
.orange { color: #ffab4f; }
.red { color: #af3422; }

.fab {
  position: absolute;
  right: 24px;
  bottom: 168px;
  width: 156px;
}

.camera {
  display: block;
  width: 144px;
  height: 210px;
  margin: 0 6px -78px;
  padding: 0 45px 60px;
  border-radius: 72px 72px 0 0;
  background: rgba(0, 0, 0, .41);
}

.locate {
  position: relative;
  display: grid;
  place-items: center;
  width: 156px;
  height: 156px;
  border-radius: 50%;
  background: #0ca3cc;
  color: #fff;
  box-shadow: 0 4px 10px rgba(0, 0, 0, .5);
}
```
